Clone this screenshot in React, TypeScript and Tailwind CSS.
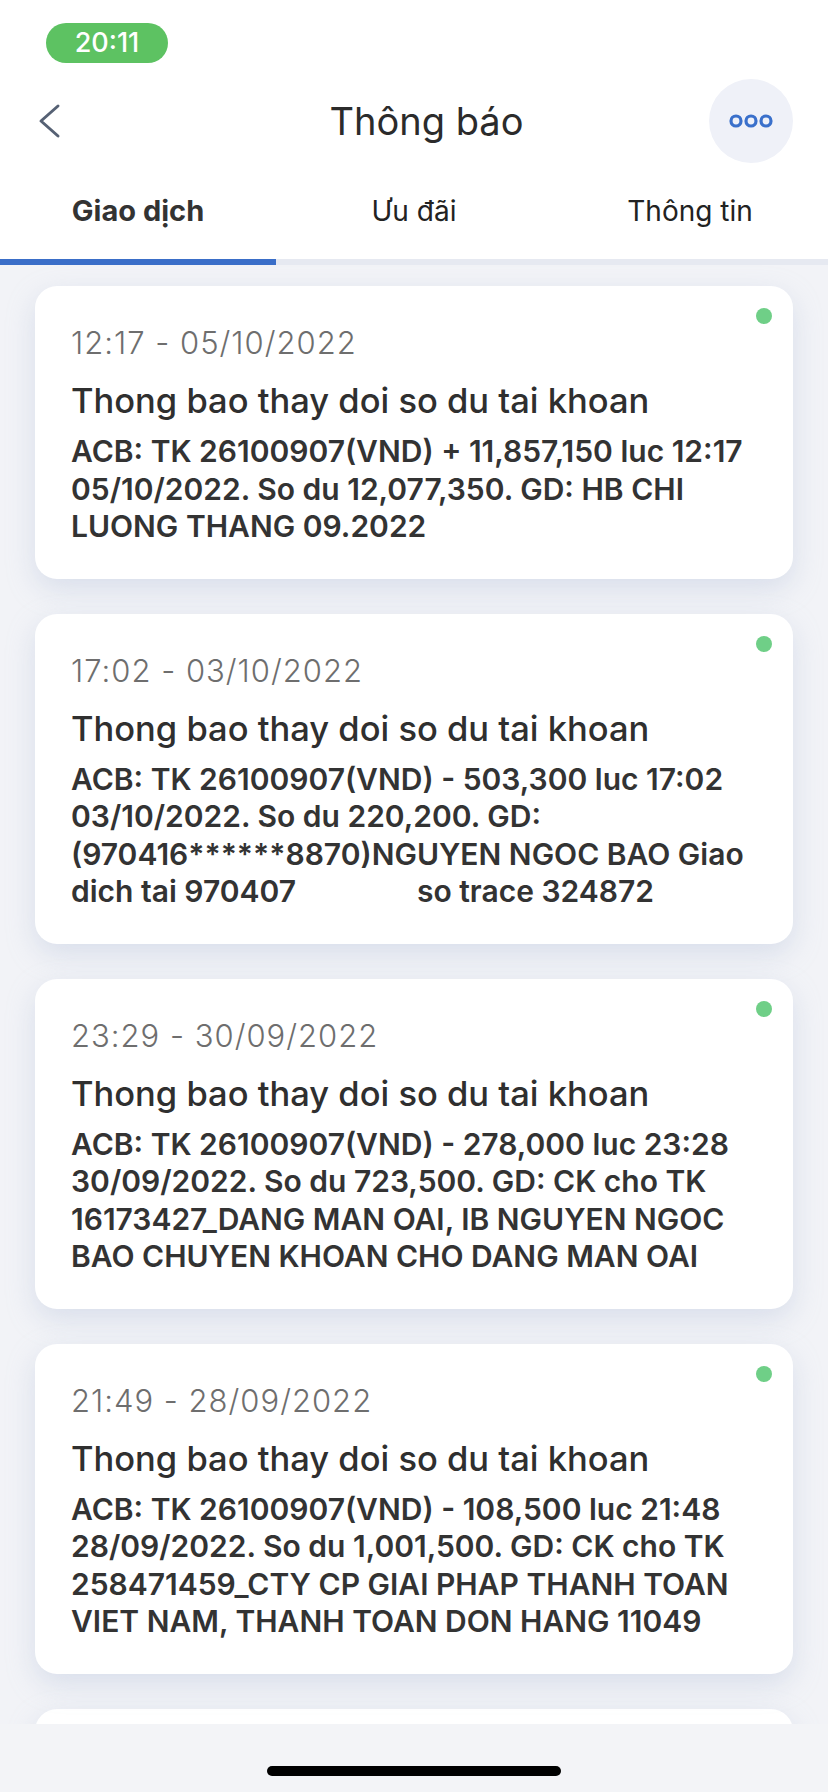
import React from 'react'

const notifications = [
  {
    time: '12:17 - 05/10/2022',
    body: 'ACB: TK 26100907(VND) + 11,857,150 luc 12:17\n05/10/2022. So du 12,077,350. GD: HB CHI\nLUONG THANG 09.2022',
  },
  {
    time: '17:02 - 03/10/2022',
    body: 'ACB: TK 26100907(VND) - 503,300 luc 17:02\n03/10/2022. So du 220,200. GD:\n(970416******8870)NGUYEN NGOC BAO Giao\ndich tai 970407                so trace 324872',
  },
  {
    time: '23:29 - 30/09/2022',
    body: 'ACB: TK 26100907(VND) - 278,000 luc 23:28\n30/09/2022. So du 723,500. GD: CK cho TK\n16173427_DANG MAN OAI, IB NGUYEN NGOC\nBAO CHUYEN KHOAN CHO DANG MAN OAI',
  },
  {
    time: '21:49 - 28/09/2022',
    body: 'ACB: TK 26100907(VND) - 108,500 luc 21:48\n28/09/2022. So du 1,001,500. GD: CK cho TK\n258471459_CTY CP GIAI PHAP THANH TOAN\nVIET NAM, THANH TOAN DON HANG 11049',
  },
]

function NotificationCard({ time, body }: { time: string; body: string }) {
  return (
    <div className="relative shrink-0 rounded-[22px] bg-white pl-[36px] pr-[20px] pt-[39px] pb-[33px] shadow-[0_10px_28px_rgba(170,182,212,0.35)]">
      <span className="absolute right-[21px] top-[22px] h-[16px] w-[16px] rounded-full bg-[#6fcf87]" />
      <p className="text-[31px] leading-[36px] font-light tracking-[1px] text-[#6e6e6e]">{time}</p>
      <h3 className="mt-[19px] text-[34.5px] leading-[42px] font-medium text-[#2f2f2f]">
        Thong bao thay doi so du tai khoan
      </h3>
      <p className="mt-[11px] whitespace-pre-wrap text-[30px] leading-[37.5px] font-semibold text-[#333333]">
        {body}
      </p>
    </div>
  )
}

export default function App() {
  return (
    <div
      className="relative flex h-[1792px] w-[828px] flex-col overflow-hidden bg-[#f2f3f7]"
      style={{ fontFamily: 'Inter, "Liberation Sans", sans-serif' }}
    >
      {/* status bar + header */}
      <div className="shrink-0 bg-white">
        <div className="h-[79px] pl-[46px] pt-[23px]">
          <div className="flex h-[40px] w-[122px] items-center justify-center rounded-full bg-[#5dc262] text-[27px] font-medium text-white">
            20:11
          </div>
        </div>

        <div className="flex h-[84px] items-center pl-[36px] pr-[35px]">
          <div className="flex flex-1">
            <button className="flex h-[40px] w-[26px] items-center justify-center">
              <svg width="24" height="36" viewBox="0 0 24 36" fill="none">
                <path d="M21 3 L4 18 L21 33" stroke="#566174" strokeWidth="3" strokeLinecap="round" strokeLinejoin="round" />
              </svg>
            </button>
          </div>
          <h1 className="ml-[24px] text-[38px] font-normal text-[#2b2b2b]">Thông báo</h1>
          <div className="flex flex-1 justify-end">
            <button className="flex h-[84px] w-[84px] items-center justify-center rounded-full bg-[#eff1f8]">
              <svg width="46" height="16" viewBox="0 0 46 16" fill="none">
                <circle cx="8" cy="8" r="5" stroke="#3a70cb" strokeWidth="3.2" />
                <circle cx="23" cy="8" r="5" stroke="#3a70cb" strokeWidth="3.2" />
                <circle cx="38" cy="8" r="5" stroke="#3a70cb" strokeWidth="3.2" />
              </svg>
            </button>
          </div>
        </div>

        <div className="grid h-[96px] grid-cols-3 items-center text-[28px] text-[#222222]">
          <div className="text-center text-[29px] font-bold text-[#333333]">Giao dịch</div>
          <div className="text-center">Ưu đãi</div>
          <div className="text-center">Thông tin</div>
        </div>

        <div className="grid h-[6px] grid-cols-3 bg-[#e6e9f1]">
          <div className="bg-[#3a6ec8]" />
        </div>
      </div>

      {/* list */}
      <div className="flex flex-col gap-[35px] px-[35px] pt-[21px]">
        {notifications.map((n, i) => (
          <NotificationCard key={i} time={n.time} body={n.body} />
        ))}
        <div className="h-[120px] shrink-0 rounded-[22px] bg-white shadow-[0_10px_28px_rgba(170,182,212,0.35)]" />
      </div>

      {/* home indicator */}
      <div className="absolute bottom-0 left-0 right-0 flex h-[68px] items-start justify-center bg-[#f3f4f7] pt-[42px]">
        <div className="h-[10px] w-[294px] rounded-full bg-black" />
      </div>
    </div>
  )
}
